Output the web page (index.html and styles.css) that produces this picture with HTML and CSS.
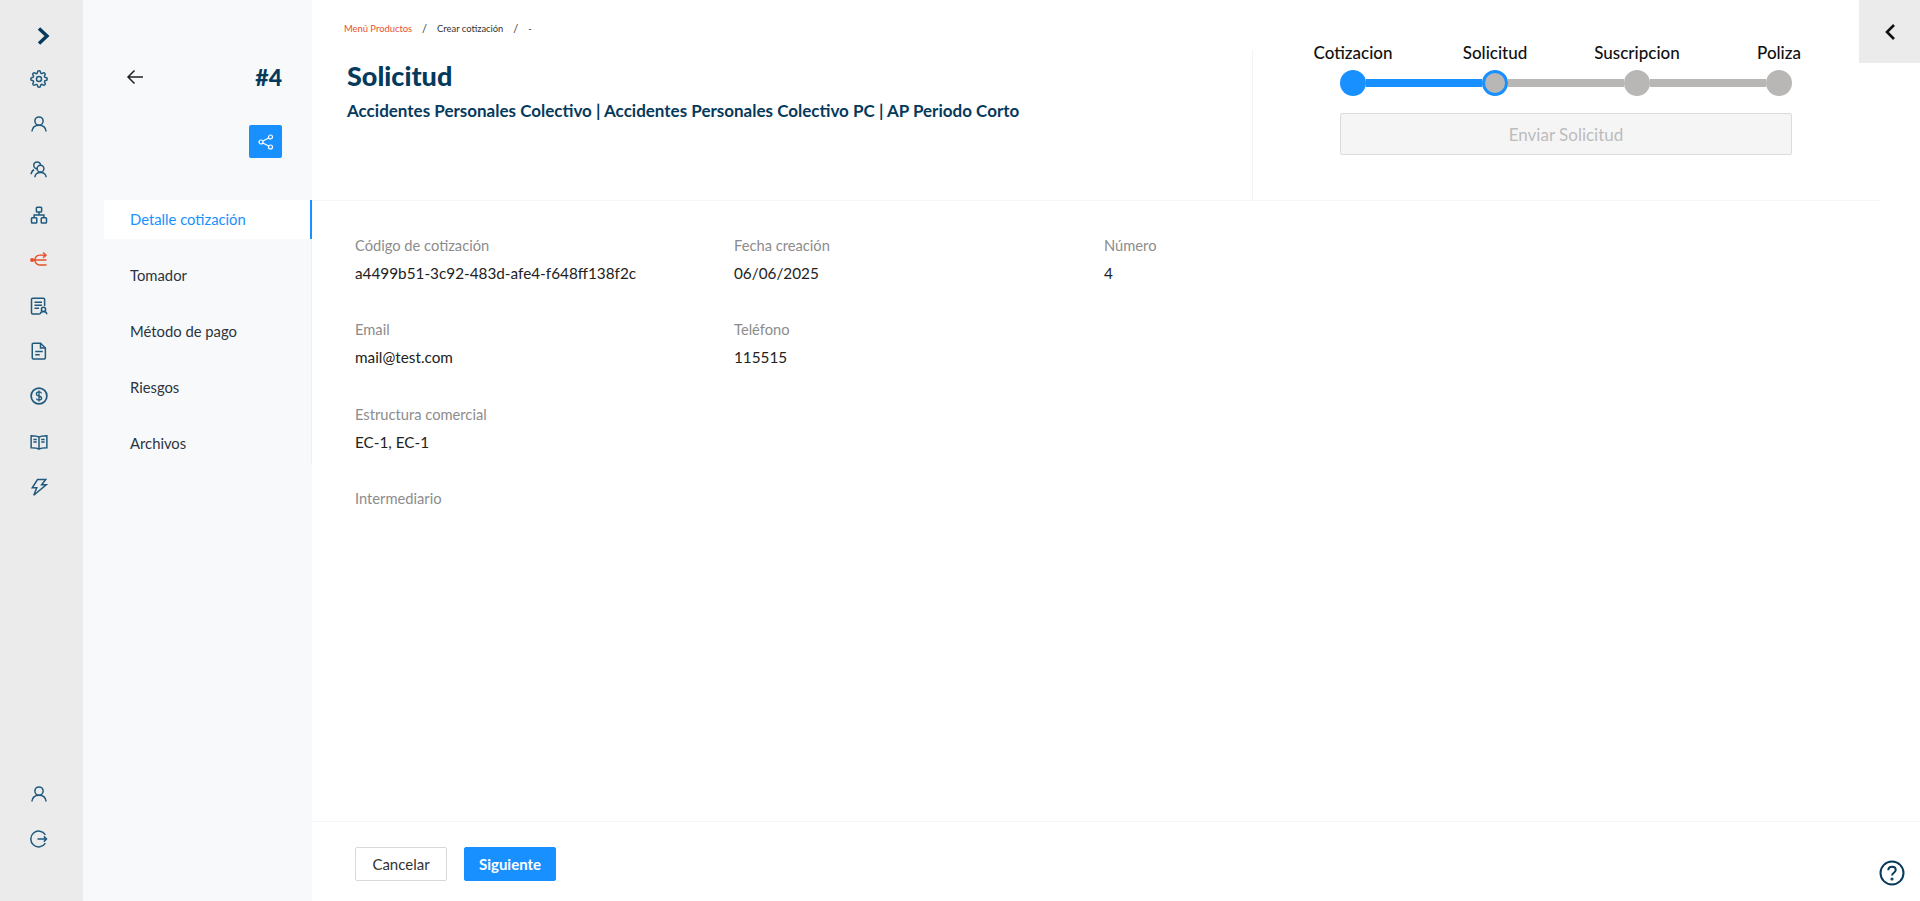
FILE: index.html
```html
<!DOCTYPE html>
<html lang="es">
<head>
<meta charset="utf-8">
<title>Solicitud</title>
<link rel="stylesheet" href="styles.css">
</head>
<body>
<div class="app">
  <nav class="rail">
    <div class="rail-group">
      <div class="rail-toggle"><svg width="18" height="20" viewBox="0 0 18 20"><path d="M5 2.500 13 10l-8 7.500" fill="none" stroke="#063a5c" stroke-width="3.400"/></svg></div>
      <div class="rail-item"><svg class="ico" viewBox="0 0 24 24"><circle cx="12" cy="12" r="3.400"/><path d="M19.400 15a1.650 1.650 0 0 0 .33 1.820l.06.06a2 2 0 0 1 0 2.830 2 2 0 0 1-2.830 0l-.06-.06a1.650 1.650 0 0 0-1.820-.33 1.650 1.650 0 0 0-1 1.510V21a2 2 0 0 1-2 2 2 2 0 0 1-2-2v-.09A1.650 1.650 0 0 0 9 19.400a1.650 1.650 0 0 0-1.820.33l-.06.06a2 2 0 0 1-2.830 0 2 2 0 0 1 0-2.830l.06-.06a1.650 1.650 0 0 0 .33-1.820 1.650 1.650 0 0 0-1.510-1H3a2 2 0 0 1-2-2 2 2 0 0 1 2-2h.09A1.650 1.650 0 0 0 4.600 9a1.650 1.650 0 0 0-.33-1.820l-.06-.06a2 2 0 0 1 0-2.830 2 2 0 0 1 2.830 0l.06.06a1.650 1.650 0 0 0 1.820.33H9a1.650 1.650 0 0 0 1-1.510V3a2 2 0 0 1 2-2 2 2 0 0 1 2 2v.09a1.650 1.650 0 0 0 1 1.510 1.650 1.650 0 0 0 1.820-.33l.06-.06a2 2 0 0 1 2.830 0 2 2 0 0 1 0 2.830l-.06.06a1.650 1.650 0 0 0-.33 1.820V9a1.650 1.650 0 0 0 1.510 1H21a2 2 0 0 1 2 2 2 2 0 0 1-2 2h-.09a1.650 1.650 0 0 0-1.510 1z"/></svg></div>
      <div class="rail-item"><svg class="ico" viewBox="0 0 24 24"><circle cx="12" cy="8" r="5.500"/><path d="M2.500 22c.5-5.500 4-8.500 9.500-8.500s9 3 9.500 8.500"/></svg></div>
      <div class="rail-item"><svg class="ico" viewBox="0 0 24 24"><circle cx="9.500" cy="7" r="4.500"/><circle cx="14" cy="11.500" r="4.500" fill="#ebebeb"/><path d="M1.500 19c.3-3 1.800-5 4-6"/><path d="M6.500 23c.3-4 3.300-6.500 7.500-6.500s7.200 2.500 7.500 6.500"/></svg></div>
      <div class="rail-item"><svg class="ico" viewBox="0 0 24 24"><rect x="8.500" y="1.500" width="7" height="6.500" rx="1"/><rect x="2" y="15.500" width="7" height="7" rx="1"/><rect x="15" y="15.500" width="7" height="7" rx="1"/><path d="M12 8v4M5.500 15.500V12h13v3.500"/></svg></div>
      <div class="rail-item"><svg class="ico ico-active" viewBox="0 0 24 24"><circle cx="2.800" cy="12" r="1.700" fill="#e8512b"/><path d="M3 12h19M22 18.500h-9a6.500 6.500 0 0 1 0-13h8"/><path d="m17.500 2 3.800 3.500-3.800 3.500"/></svg></div>
      <div class="rail-item"><svg class="ico" viewBox="0 0 24 24"><path d="M13 22.500H3.500a1.500 1.500 0 0 1-1.500-1.500V3a1.500 1.500 0 0 1 1.500-1.500h14.500A1.500 1.500 0 0 1 19.500 3v9"/><path d="M6 7h10M6 11h10M6 15h6"/><circle cx="18" cy="16.500" r="2.800"/><path d="M13.500 23c.3-2.500 2-3.700 4.500-3.700s4.200 1.200 4.500 3.700"/></svg></div>
      <div class="rail-item"><svg class="ico" viewBox="0 0 24 24"><path d="M4.500 1.500h9.500l6.500 6.500v13a1.500 1.500 0 0 1-1.500 1.500H4.500A1.500 1.500 0 0 1 3 21V3a1.500 1.500 0 0 1 1.500-1.500z"/><path d="M14 1.500V8h6.500M7 12.500h10M7 17h6"/></svg></div>
      <div class="rail-item"><svg class="ico" viewBox="0 0 24 24"><circle cx="12" cy="12" r="10.500" stroke-width="2.300"/><path d="M15.500 8.500c-.5-1.300-1.800-2-3.500-2-2 0-3.500 1-3.500 2.700 0 3.800 7 1.800 7 5.600 0 1.700-1.500 2.700-3.500 2.700-1.700 0-3-.7-3.500-2M12 4.800v14.400" stroke-width="1.800"/></svg></div>
      <div class="rail-item"><svg class="ico" viewBox="0 0 24 24"><path d="M12 5.500C10 4 7 3.500 1.500 3.500v16c5.500 0 8.500.5 10.500 2 2-1.500 5-2 10.500-2v-16C17 3.500 14 4 12 5.500zM12 5.500v16"/><path d="M4.500 8.500h4.500M4.500 12h4.500M15 8.500h4.500M15 12h4.500"/></svg></div>
      <div class="rail-item"><svg class="ico" viewBox="0 0 24 24"><path d="M10 2h11l-5.500 7h6L5 23l4-10H3z"/></svg></div>
    </div>
    <div class="rail-group">
      <div class="rail-item"><svg class="ico" viewBox="0 0 24 24"><circle cx="12" cy="8" r="5.500"/><path d="M2.500 22c.5-5.500 4-8.500 9.500-8.500s9 3 9.500 8.500"/></svg></div>
      <div class="rail-item"><svg class="ico" viewBox="0 0 24 24"><path d="M20.500 6.500A10.500 10.500 0 1 0 20.500 17.500"/><path d="M10 12h12M18.500 8.500 22 12l-3.500 3.500"/></svg></div>
    </div>
  </nav>

  <aside class="side">
    <div class="side-head">
      <svg class="back" width="18" height="16" viewBox="0 0 18 16"><path d="M17 8H2M8.500 1.500 2 8l6.500 6.500" fill="none" stroke="#222" stroke-width="1.500"/></svg>
      <span class="num">#4</span>
    </div>
    <div class="share-row">
      <button class="share" type="button"><svg width="16" height="16" viewBox="0 0 16 16" fill="none" stroke="#fff" stroke-width="1.200"><circle cx="12.500" cy="3" r="2"/><circle cx="3" cy="8" r="2"/><circle cx="12.500" cy="13" r="2"/><path d="M4.800 7 10.700 4M4.800 9l5.900 3"/></svg></button>
    </div>
    <ul class="side-nav">
      <li class="side-link active">Detalle cotización</li>
      <li class="side-link">Tomador</li>
      <li class="side-link">Método de pago</li>
      <li class="side-link">Riesgos</li>
      <li class="side-link">Archivos</li>
    </ul>
  </aside>

  <main class="main">
    <header class="head">
      <div class="head-left">
        <div class="crumbs"><span class="crumb-root">Menú Productos</span><i>/</i><span>Crear cotización</span><i>/</i><span>-</span></div>
        <h1 class="title">Solicitud</h1>
        <p class="subtitle">Accidentes Personales Colectivo | Accidentes Personales Colectivo PC | AP Periodo Corto</p>
      </div>
      <div class="head-right">
        <div class="stepper">
          <div class="step-labels"><span>Cotizacion</span><span>Solicitud</span><span>Suscripcion</span><span>Poliza</span></div>
          <div class="track">
            <span class="dot done"></span><span class="seg done"></span>
            <span class="dot current"></span><span class="seg"></span>
            <span class="dot"></span><span class="seg"></span>
            <span class="dot"></span>
          </div>
          <button class="send" type="button" disabled>Enviar Solicitud</button>
        </div>
      </div>
    </header>

    <section class="details">
      <div class="field"><div class="label">Código de cotización</div><div class="value">a4499b51-3c92-483d-afe4-f648ff138f2c</div></div>
      <div class="field"><div class="label">Fecha creación</div><div class="value">06/06/2025</div></div>
      <div class="field"><div class="label">Número</div><div class="value">4</div></div>
      <div class="field"><div class="label">Email</div><div class="value">mail@test.com</div></div>
      <div class="field field-wide"><div class="label">Teléfono</div><div class="value">115515</div></div>
      <div class="field field-full"><div class="label">Estructura comercial</div><div class="value">EC-1, EC-1</div></div>
      <div class="field field-full"><div class="label">Intermediario</div></div>
    </section>

    <footer class="foot">
      <button class="btn btn-ghost" type="button">Cancelar</button>
      <button class="btn btn-primary" type="button">Siguiente</button>
    </footer>
  </main>

  <button class="panel-toggle" type="button"><svg width="14" height="20" viewBox="0 0 14 20"><path d="M11 3 4 10l7 7" fill="none" stroke="#111" stroke-width="2.600"/></svg></button>
  <div class="help"><svg width="26" height="26" viewBox="0 0 26 26" fill="none" stroke="#063a5c" stroke-width="2"><circle cx="13" cy="13" r="11.500"/><path d="M9.300 10.300c0-2.200 1.600-3.500 3.700-3.500s3.700 1.300 3.700 3.200c0 2.800-3.700 2.800-3.700 5.600"/><circle cx="13" cy="19" r=".6" fill="#063a5c"/></svg></div>
</div>
</body>
</html>
```
FILE: styles.css
```css
* { box-sizing: border-box; }
html, body { margin: 0; height: 100%; }
body { font-family: "Lato", "Noto Sans", sans-serif; color: #222; background: #fff; overflow: hidden; }
button { font-family: inherit; cursor: pointer; }
ul { list-style: none; margin: 0; padding: 0; }

.app { position: relative; display: flex; width: 1920px; height: 901px; }

/* icon rail */
.rail { width: 83px; flex: none; background: #ebebeb; display: flex; flex-direction: column; justify-content: space-between; padding: 25px 6px 39px 0; }
.rail-group { display: flex; flex-direction: column; align-items: center; }
.rail-toggle { height: 22px; margin-bottom: 9px; padding-left: 9px; display: flex; align-items: center; justify-content: center; }
.rail-item { width: 40px; height: 45.400px; display: flex; align-items: center; justify-content: center; }
.ico { width: 18px; height: 18px; fill: none; stroke: #1f5a7e; stroke-width: 2; }
.ico-active { stroke: #e8512b; }

/* section panel */
.side { width: 229px; flex: none; background: #f8f9fb; padding-top: 65px; }
.side-head { display: flex; justify-content: space-between; align-items: center; height: 24px; padding: 0 30px 0 43px; }
.num { font-size: 23px; font-weight: 900; color: #063a5c; }
.share-row { display: flex; justify-content: flex-end; padding-right: 30px; margin-top: 36px; }
.share { width: 33px; height: 33px; padding: 0; border: 0; border-radius: 2px; background: #1890ff; display: flex; align-items: center; justify-content: center; }
.side-nav { margin: 42px 0 0 21px; border-right: 1px solid #eef0f3; padding-bottom: 0; display: flex; flex-direction: column; gap: 17px; height: 264px; }
.side-link { height: 39px; line-height: 39px; padding-left: 26px; font-size: 14.800px; color: #2b3440; }
.side-link.active { background: #fff; color: #1890ff; border-right: 2px solid #1890ff; margin-right: -1px; }

/* main */
.main { flex: 1; min-width: 0; display: flex; flex-direction: column; }
.head { height: 201px; flex: none; margin-right: 40px; border-bottom: 1px solid #f4f5f7; display: flex; }
.head-left { width: 940px; flex: none; padding: 20px 0 0 35px; }
.crumbs { height: 18px; line-height: 18px; margin-left: -3px; font-size: 9.400px; color: #333; display: flex; gap: 10px; }
.crumbs i { font-style: normal; font-size: 11px; }
.crumb-root { color: #e8512b; }
.title { margin: 20px 0 0; font-size: 27px; line-height: 36px; font-weight: 900; color: #063a5c; }
.subtitle { margin: 5px 0 0; font-size: 17px; line-height: 24px; font-weight: 700; color: #063a5c; white-space: nowrap; }
.head-right { flex: 1; margin-top: 50px; border-left: 1px solid #f1f3f7; padding-left: 87px; }
.stepper { width: 452px; margin-top: -7px; }
.step-labels { display: flex; margin-left: -58px; width: 568px; height: 20px; line-height: 20px; font-size: 17px; font-weight: 500; color: #111; }
.step-labels span { width: 142px; text-align: center; }
.track { display: flex; align-items: center; margin-top: 7px; height: 26px; }
.dot { width: 26px; height: 26px; flex: none; border-radius: 50%; background: #b9b7b5; }
.dot.done { background: #1890ff; }
.dot.current { border: 3px solid #1890ff; }
.seg { width: 116px; height: 8px; flex: none; background: #b9b7b5; }
.seg.done { background: #1890ff; }
.send { display: block; width: 100%; height: 42px; margin-top: 17px; border: 1px solid #dcdcdc; border-radius: 2px; background: #f5f5f5; color: #bcbcbc; font-size: 17px; cursor: not-allowed; }

/* details */
.details { flex: 1; padding: 33.500px 0 0 43px; display: grid; grid-template-columns: 379px 370px 1fr; grid-auto-rows: 48px; row-gap: 36.500px; align-content: start; }
.field-full { grid-column: 1 / -1; }
.field-wide { grid-column: 2 / -1; }
.label { height: 20px; line-height: 20px; font-size: 14.700px; color: #8c8c8c; }
.value { height: 20px; line-height: 20px; margin-top: 8px; font-size: 15.300px; color: #222; }

/* footer */
.foot { height: 80px; flex: none; border-top: 1px solid #f4f5f7; padding: 25px 0 0 43px; display: flex; gap: 17px; align-items: flex-start; }
.btn { height: 34px; border-radius: 2px; font-size: 15px; padding: 0; }
.btn-ghost { width: 92px; background: #fff; border: 1px solid #d9d9d9; color: #333; }
.btn-primary { width: 92px; background: #1890ff; border: 1px solid #1890ff; color: #fff; font-weight: 700; }

.panel-toggle { position: absolute; top: 0; right: 0; width: 61px; height: 63px; padding: 0; border: 0; background: #ebebeb; display: flex; align-items: center; justify-content: center; }
.help { position: absolute; right: 15px; bottom: 15px; width: 26px; height: 26px; }
```
